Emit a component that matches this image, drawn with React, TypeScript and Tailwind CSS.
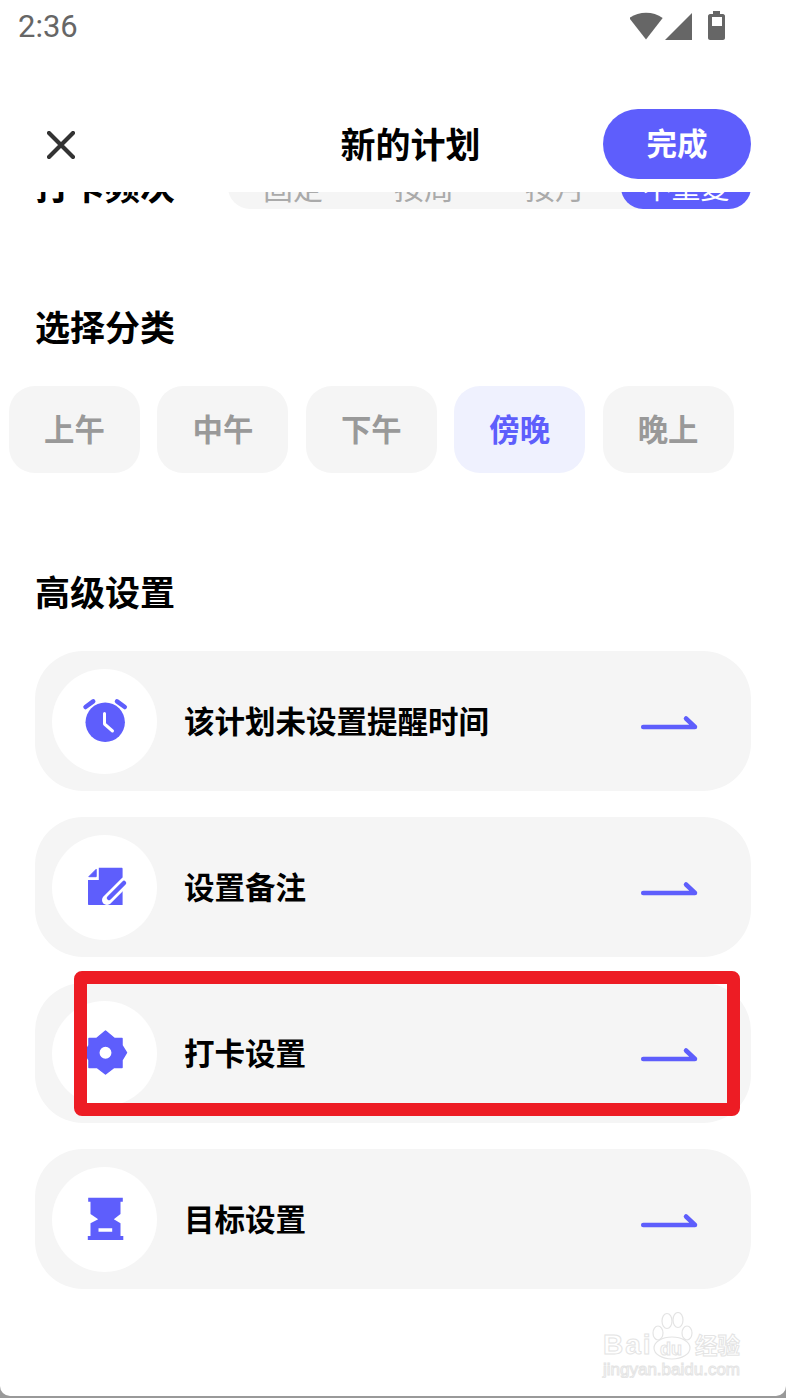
import React from "react";

const CJK = "font-['Noto_Sans_CJK_SC','Noto_Sans',sans-serif]";

const AlarmIcon = () => (
  <svg width="60" height="60" viewBox="0 0 60 60">
    <circle cx="30.2" cy="31.3" r="19.7" fill="#5e5efc" />
    <path d="M10.5 16 18.2 10.4M42 10.4 49.8 16" stroke="#5e5efc" strokeWidth="4.5" strokeLinecap="round" />
    <path d="M29.5 22.5V33L37.5 40" fill="none" stroke="#fff" strokeWidth="3" strokeLinecap="round" strokeLinejoin="round" />
  </svg>
);

const NoteIcon = () => (
  <svg width="60" height="60" viewBox="0 0 60 60">
    <path d="M13.8 19.7 21.2 12.3V19.7Z" fill="#5e5efc" stroke="#5e5efc" strokeLinejoin="round" />
    <path d="M13 23H23.8V10.8H46.6C47.2 10.8 47.6 11.2 47.6 11.8V48H14C13.4 48 13 47.6 13 47Z" fill="#5e5efc" />
    <path d="M32 43 50 25" stroke="#fff" strokeWidth="10" strokeLinecap="round" />
    <path d="M34 41 49 26" stroke="#5e5efc" strokeWidth="4.5" strokeLinecap="round" />
  </svg>
);

const GearIcon = () => (
  <svg width="60" height="60" viewBox="0 0 60 60">
    <path
      fillRule="evenodd"
      fill="#5e5efc"
      stroke="#5e5efc"
      strokeWidth="1.5"
      strokeLinejoin="round"
      d="M30.5 8 39.5 15.5H47V22.5L51.5 29.7 47 37V44.5H39L30.5 51 22 44.5H14V37L9.5 29.7 14 22.5V15.5H21.5ZM30.5 23A6.7 6.7 0 1 0 30.5 36.4 6.7 6.7 0 1 0 30.5 23Z"
    />
  </svg>
);

const HourglassIcon = () => (
  <svg width="60" height="60" viewBox="0 0 60 60">
    <path
      fillRule="evenodd"
      fill="#5e5efc"
      d="M13.2 8.7H47.8V12.7H45.5V25L38.8 30.3 45.5 34.3V47H48.3V51H12.8V47H15.5V34.3L23.2 30.3 15.5 25V12.7H13.2ZM23.5 39.3H37.2V42.7H23.5Z"
    />
  </svg>
);

const ArrowIcon = () => (
  <svg width="60" height="20" viewBox="0 0 60 20">
    <path d="M4.2 15H56L47 6.5" fill="none" stroke="#5e5efc" strokeWidth="4.5" strokeLinecap="round" strokeLinejoin="round" />
  </svg>
);

const chips = ["上午", "中午", "下午", "傍晚", "晚上"];

const rows = [
  { label: "该计划未设置提醒时间", icon: <AlarmIcon /> },
  { label: "设置备注", icon: <NoteIcon /> },
  { label: "打卡设置", icon: <GearIcon /> },
  { label: "目标设置", icon: <HourglassIcon /> },
];

export default function App() {
  return (
    <div className={`relative w-[786px] h-[1398px] overflow-hidden bg-white flex flex-col ${CJK}`}>
      {/* Status bar */}
      <div className="h-[54px] shrink-0 flex items-center justify-between pl-[18px] pr-[60px]">
        <span className="font-['Roboto',sans-serif] text-[31px] leading-[56px] h-[56px] text-[#666]">2:36</span>
        <svg width="96" height="30" viewBox="0 0 96 30" className="mt-[-2px]">
          <path d="M-0.7 7C4 3.5 10 1.7 16 1.7S28 3.5 32.7 7L16 28.5Z" fill="#666" />
          <path d="M35 29 62 2V29Z" fill="#666" />
          <path d="M80 3H83V0H90V3H93C94 3 95 4 95 5V27C95 28 94 29 93 29H80C79 29 78 28 78 27V5C78 4 79 3 80 3Z" fill="#666" />
          <rect x="82" y="6" width="10" height="9" fill="#fff" />
        </svg>
      </div>

      {/* Header */}
      <div className="h-[138px] shrink-0 relative flex items-start justify-between pl-[47px] pr-[35px] pt-[55px]">
        <svg width="28" height="28" viewBox="0 0 28 28" className="mt-[22px]">
          <path d="M2 2 26 26M26 2 2 26" stroke="#333" strokeWidth="4.2" strokeLinecap="round" />
        </svg>
        <span className="absolute left-[340.5px] top-[64px] text-[35px] leading-[50px] font-bold text-black">新的计划</span>
        <button className="w-[148px] h-[70px] pb-[2px] rounded-[35px] bg-[#5e5efc] text-white text-[30.5px] font-bold">完成</button>
      </div>

      {/* Scrolled content */}
      <div className="flex-1 overflow-hidden">
        <div className="-mt-[27px] h-[44px] flex items-center pl-[35px] pr-[35px]">
          <span className="w-[193px] text-[35px] leading-[40px] h-[44px] font-bold text-black">打卡频次</span>
          <div className="flex-1 h-[44px] rounded-[22px] bg-[#f5f5f5] flex items-start">
            <span className="w-[131px] pl-[35px] text-[30px] leading-[42px] text-[#aaa]">固定</span>
            <span className="w-[131px] pl-[35px] text-[30px] leading-[42px] text-[#aaa]">按周</span>
            <span className="w-[131px] pl-[35px] text-[30px] leading-[42px] text-[#aaa]">按月</span>
            <span className="w-[130px] h-[44px] rounded-[22px] bg-[#5e5efc] text-white text-[29px] leading-[42px] text-center">不重复</span>
          </div>
        </div>

        <h2 className="mt-[92px] pl-[35px] text-[35px] leading-[50px] font-bold text-black">选择分类</h2>
        <div className="mt-[35px] pl-[9px] flex gap-[17.4px]">
          {chips.map((c) => (
            <div
              key={c}
              className={`w-[131px] h-[87px] pb-[2px] rounded-[26px] flex items-center justify-center text-[30.4px] font-bold ${
                c === "傍晚" ? "bg-[#eff1fe] text-[#5e5efc]" : "bg-[#f5f5f5] text-[#999]"
              }`}
            >
              {c}
            </div>
          ))}
        </div>

        <h2 className="mt-[93px] pl-[35px] text-[35px] leading-[50px] font-bold text-black">高级设置</h2>
        <div className="mt-[35px] mx-[35px] flex flex-col gap-[26px]">
          {rows.map((r) => (
            <div key={r.label} className="h-[140px] rounded-[48px] bg-[#f5f5f5] flex items-center pl-[17px] pr-[52px]">
              <div className="w-[105px] h-[105px] rounded-full bg-white flex items-center justify-center shrink-0">
                {r.icon}
              </div>
              <span className="ml-[27px] flex-1 text-[30.5px] font-bold text-black">{r.label}</span>
              <div className="mt-[2px]">
                <ArrowIcon />
              </div>
            </div>
          ))}
        </div>
      </div>

      {/* Red annotation */}
      <div className="absolute left-[74px] top-[971px] w-[666px] h-[145px] border-[13px] border-[#ed1c24] rounded-[8px]" />

      {/* Watermark */}
      <div className="absolute left-[603px] top-[1312px] w-[142px] h-[70px] text-transparent [-webkit-text-stroke:1px_#e4e4e4] font-['Liberation_Sans',sans-serif]">
        <svg width="60" height="50" viewBox="0 0 60 50" className="absolute left-[46px] top-0" fill="none" stroke="#e4e4e4" strokeWidth="1.2">
          <ellipse cx="9" cy="21" rx="5" ry="7" />
          <ellipse cx="18" cy="9" rx="5" ry="7.5" />
          <ellipse cx="29" cy="8" rx="5" ry="7.5" />
          <ellipse cx="38" cy="21" rx="5" ry="7" />
          <ellipse cx="23" cy="36" rx="18" ry="11" />
        </svg>
        <span className="absolute left-0 top-[16px] text-[28px] leading-[34px] tracking-[2px] font-bold">Bai</span>
        <span className="absolute left-[57px] top-[26px] text-[18px] leading-[22px] font-bold">du</span>
        <span className={`absolute left-[92px] top-[19px] text-[22.5px] leading-[26px] font-bold ${CJK}`}>经验</span>
        <span className="absolute left-0 top-[48px] text-[17px] leading-[20px]">jingyan.baidu.com</span>
      </div>

      {/* Bottom screen edge */}
      <div className="absolute left-0 bottom-0 w-[786px] h-[20px] bg-[#999]">
        <div className="h-[18px] rounded-b-[10px] bg-white" />
      </div>
    </div>
  );
}
